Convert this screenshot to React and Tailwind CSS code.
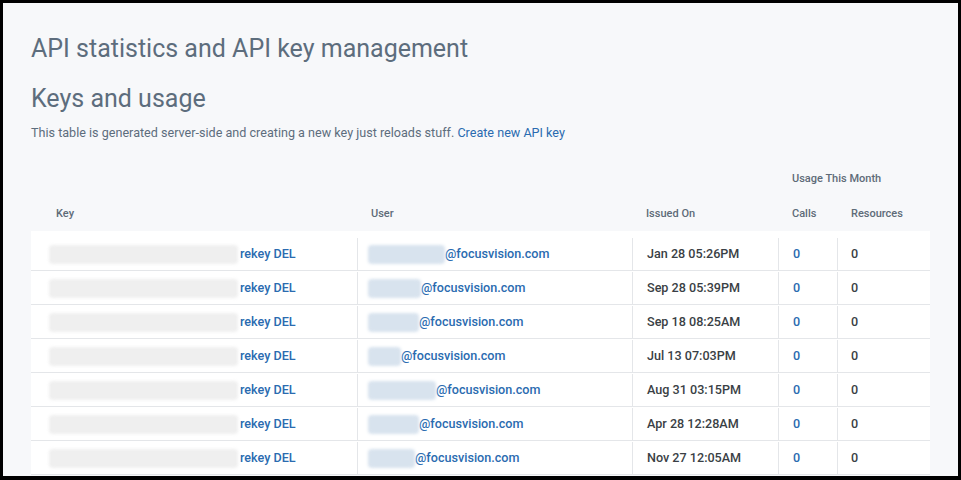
const rows = [
  { u: 77, date: "Jan 28 05:26PM" },
  { u: 53, date: "Sep 28 05:39PM" },
  { u: 51, date: "Sep 18 08:25AM" },
  { u: 33, date: "Jul 13 07:03PM" },
  { u: 68, date: "Aug 31 03:15PM" },
  { u: 51, date: "Apr 28 12:28AM" },
  { u: 47, date: "Nov 27 12:05AM" },
];

const cols = "grid-cols-[327px_275px_146px_59px_92px]";

function Row({ row, first }) {
  return (
    <div className={`grid ${cols} bg-white border-b border-[#e4e6e9] text-[12.6px] font-medium ${first ? "h-[40px] pt-[7px]" : "h-[34px] pt-[1px]"}`}>
      <div className="flex items-center pl-[18px] border-r border-[#e4e6e9]">
        <div className="w-[189px] h-[19px] bg-[#efefef] blur-[1.5px] rounded-sm" />
        <a className="ml-[2px] text-[#2a6bb0]">rekey DEL</a>
      </div>
      <div className="flex items-center pl-[10px] border-r border-[#e4e6e9]">
        <div className="h-[19px] bg-[#d8e3ee] blur-[1.5px] rounded-sm" style={{ width: row.u }} />
        <a className="text-[#2a6bb0]">@focusvision.com</a>
      </div>
      <div className="flex items-center pl-[14px] border-r border-[#e4e6e9] text-[#3a3f45]">{row.date}</div>
      <div className="flex items-center pl-[14px] border-r border-[#e4e6e9] text-[#2a6bb0]">0</div>
      <div className="flex items-center pl-[13px] text-[#3a3f45]">0</div>
    </div>
  );
}

export default function App() {
  return (
    <div className="w-[961px] h-[480px] overflow-hidden bg-black pt-[3px] pl-[3px] pr-[3px] pb-[4px] font-['Roboto',sans-serif]">
      <div className="h-full bg-[#f7f8fa] px-7 pt-[31px] overflow-hidden">
        <h1 className="text-[25px] leading-[30px] text-[#5d6d7d]">API statistics and API key management</h1>
        <h2 className="mt-[20px] text-[25px] leading-[30px] text-[#5d6d7d]">Keys and usage</h2>
        <p className="mt-[8px] text-[12.6px] leading-[21px] text-[#5d6d7d]">
          This table is generated server-side and creating a new key just reloads stuff.{" "}
          <a className="text-[#2a6bb0]">Create new API key</a>
        </p>
        <div className="mt-[26px] w-[899px]">
          <div className={`grid ${cols} text-[11px] font-medium text-[#5e6b78]`}>
            <div className="col-start-4 col-span-2 pl-[13px] h-[20px] flex items-center whitespace-nowrap">Usage This Month</div>
          </div>
          <div className={`grid ${cols} mt-[15px] h-[20px] text-[11px] font-medium text-[#5e6b78]`}>
            <div className="pl-[25px] flex items-center">Key</div>
            <div className="pl-[13px] flex items-center">User</div>
            <div className="pl-[13px] flex items-center">Issued On</div>
            <div className="pl-[13px] flex items-center">Calls</div>
            <div className="pl-[13px] flex items-center">Resources</div>
          </div>
          <div className="mt-[7px]">
            {rows.map((r, i) => (
              <Row key={i} row={r} first={i === 0} />
            ))}
          </div>
        </div>
      </div>
    </div>
  );
}
